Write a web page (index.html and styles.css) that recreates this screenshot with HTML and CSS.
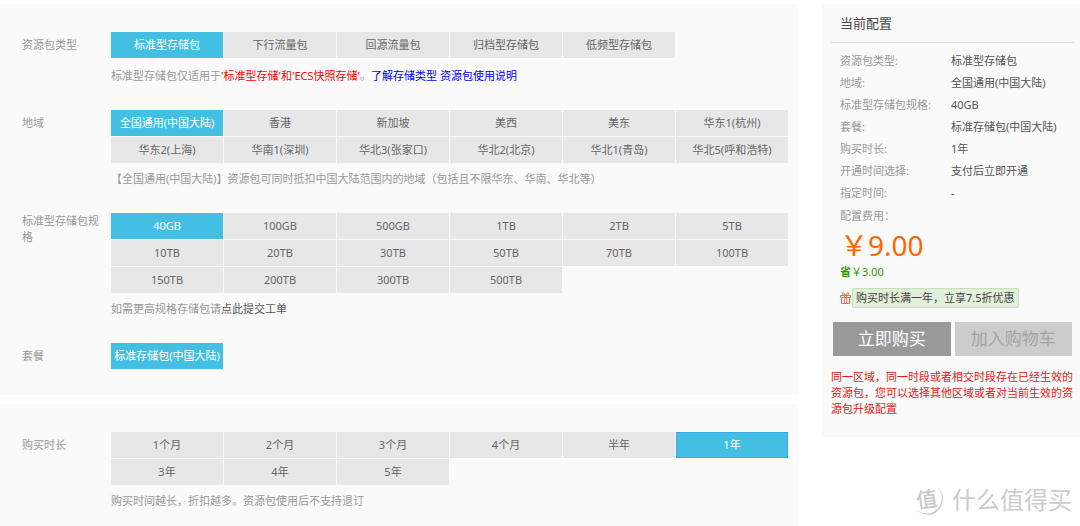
FILE: index.html
```html
<!DOCTYPE html>
<html lang="zh-CN">
<head>
<meta charset="utf-8">
<meta name="viewport" content="width=device-width, initial-scale=1">
<title>资源包购买</title>
<link rel="stylesheet" href="styles.css">
</head>
<body>
<div class="page">
  <main class="main">
    <section class="panel">
      <div class="row" role="group" aria-labelledby="l-type">
        <div class="label" id="l-type">资源包类型</div>
        <div class="field">
          <div class="options">
            <button type="button" class="option selected" aria-pressed="true">标准型存储包</button>
            <button type="button" class="option">下行流量包</button>
            <button type="button" class="option">回源流量包</button>
            <button type="button" class="option">归档型存储包</button>
            <button type="button" class="option">低频型存储包</button>
          </div>
          <p class="hint hint-spaced">标准型存储包仅适用于<span class="emphasis">'标准型存储'和'ECS快照存储'</span>。<a class="doc-link" href="#">了解存储类型</a> <a class="doc-link" href="#">资源包使用说明</a></p>
        </div>
      </div>
      <div class="row" role="group" aria-labelledby="l-region">
        <div class="label" id="l-region">地域</div>
        <div class="field">
          <div class="options">
            <button type="button" class="option selected" aria-pressed="true">全国通用(中国大陆)</button>
            <button type="button" class="option">香港</button>
            <button type="button" class="option">新加坡</button>
            <button type="button" class="option">美西</button>
            <button type="button" class="option">美东</button>
            <button type="button" class="option">华东1(杭州)</button>
            <button type="button" class="option">华东2(上海)</button>
            <button type="button" class="option">华南1(深圳)</button>
            <button type="button" class="option">华北3(张家口)</button>
            <button type="button" class="option">华北2(北京)</button>
            <button type="button" class="option">华北1(青岛)</button>
            <button type="button" class="option">华北5(呼和浩特)</button>
          </div>
          <p class="hint">【全国通用(中国大陆)】资源包可同时抵扣中国大陆范围内的地域（包括且不限华东、华南、华北等）</p>
        </div>
      </div>
      <div class="row" role="group" aria-labelledby="l-size">
        <div class="label label-wrap" id="l-size">标准型存储包规格</div>
        <div class="field">
          <div class="options">
            <button type="button" class="option selected" aria-pressed="true">40GB</button>
            <button type="button" class="option">100GB</button>
            <button type="button" class="option">500GB</button>
            <button type="button" class="option">1TB</button>
            <button type="button" class="option">2TB</button>
            <button type="button" class="option">5TB</button>
            <button type="button" class="option">10TB</button>
            <button type="button" class="option">20TB</button>
            <button type="button" class="option">30TB</button>
            <button type="button" class="option">50TB</button>
            <button type="button" class="option">70TB</button>
            <button type="button" class="option">100TB</button>
            <button type="button" class="option">150TB</button>
            <button type="button" class="option">200TB</button>
            <button type="button" class="option">300TB</button>
            <button type="button" class="option">500TB</button>
          </div>
          <p class="hint">如需更高规格存储包请<a class="ticket-link" href="#">点此提交工单</a></p>
        </div>
      </div>
      <div class="row" role="group" aria-labelledby="l-plan">
        <div class="label" id="l-plan">套餐</div>
        <div class="field">
          <div class="options">
            <button type="button" class="option selected" aria-pressed="true">标准存储包(中国大陆)</button>
          </div>
        </div>
      </div>
    </section>
    <section class="panel panel-last">
      <div class="row" role="group" aria-labelledby="l-time">
        <div class="label" id="l-time">购买时长</div>
        <div class="field">
          <div class="options">
            <button type="button" class="option">1个月</button>
            <button type="button" class="option">2个月</button>
            <button type="button" class="option">3个月</button>
            <button type="button" class="option">4个月</button>
            <button type="button" class="option">半年</button>
            <button type="button" class="option selected focused" aria-pressed="true">1年</button>
            <button type="button" class="option">3年</button>
            <button type="button" class="option">4年</button>
            <button type="button" class="option">5年</button>
          </div>
          <p class="hint">购买时间越长，折扣越多。资源包使用后不支持退订</p>
        </div>
      </div>
    </section>
  </main>
  <aside class="side">
    <section class="summary">
      <h2 class="summary-title">当前配置</h2>
      <dl class="config">
        <dt>资源包类型:</dt><dd>标准型存储包</dd>
        <dt>地域:</dt><dd>全国通用(中国大陆)</dd>
        <dt>标准型存储包规格:</dt><dd>40GB</dd>
        <dt>套餐:</dt><dd>标准存储包(中国大陆)</dd>
        <dt>购买时长:</dt><dd>1年</dd>
        <dt>开通时间选择:</dt><dd>支付后立即开通</dd>
        <dt>指定时间:</dt><dd>-</dd>
      </dl>
      <div class="cost">
        <div class="cost-label">配置费用：</div>
        <div class="price">￥9.00</div>
        <div class="saved"><b>省</b>￥3.00</div>
        <div class="promo">
          <svg class="gift" viewBox="0 0 11 12" aria-hidden="true"><path d="M.5 3.5h10v2h-10zM1.5 5.5h8v6h-8zM4.300 3.500v8M6.700 3.500v8M5.500 3.500C4.500 1 3 .200 2.300 1.200S3 3.300 5.500 3.500C8 3.300 9.400 2.200 8.700 1.200S6.500 1 5.500 3.500z"/></svg>
          <span class="promo-text">购买时长满一年，立享7.5折优惠</span>
        </div>
      </div>
      <div class="actions">
        <button type="button" class="action buy">立即购买</button>
        <button type="button" class="action cart">加入购物车</button>
      </div>
      <p class="warning">同一区域，同一时段或者相交时段存在已经生效的资源包，您可以选择其他区域或者对当前生效的资源包升级配置</p>
    </section>
    <div class="brand">
      <svg class="brand-mark" viewBox="0 0 32 32" aria-hidden="true">
        <path class="brand-ring" d="M25 3.500C30 7.500 31 14 28.500 20C25 29 14 33 4.500 26C12 33.500 25 32.500 29.500 21.500C32.500 14 30.500 7 25 3.500z"/>
        <text class="brand-char" x="15" y="23" text-anchor="middle" transform="rotate(-8 15 16)">值</text>
      </svg>
      <span class="brand-name">什么值得买</span>
    </div>
  </aside>
</div>
</body>
</html>
```

FILE: styles.css
```css
* {
  box-sizing: border-box;
}

body {
  margin: 0;
  background: #fff;
  color: #666;
  font: 11px/16px "Noto Sans", "Noto Sans CJK SC", sans-serif;
}

p, h2, dl, dd {
  margin: 0;
}

button {
  border: 0;
  padding: 0;
  font: inherit;
  cursor: pointer;
}

a {
  text-decoration: none;
}

.page {
  display: flex;
  gap: 23px;
  padding-top: 4px;
}

.main {
  flex: 1;
  min-width: 0;
  display: flex;
  flex-direction: column;
  gap: 9px;
}

.panel {
  display: flex;
  flex-direction: column;
  gap: 26px;
  padding: 28px 11px 26px 22px;
  background: #fafafa;
}

.panel-last {
  padding-bottom: 17px;
}

.row {
  display: flex;
  gap: 9px;
}

.label {
  flex: 0 0 80px;
  padding-top: 5px;
  color: #999;
}

.label-wrap {
  padding-top: 0;
}

.field {
  flex: 1;
  min-width: 0;
}

.options {
  display: grid;
  grid-template-columns: repeat(6, 1fr);
  gap: 1px;
}

.option {
  height: 26px;
  background: #e7e7e7;
  color: #666;
  white-space: nowrap;
}

.selected {
  background: #43bfe3;
  color: #fff;
}

.focused {
  border: 1px solid #41a5ee;
}

.hint {
  margin-top: 8px;
  color: #999;
}

.hint-spaced {
  margin-top: 10px;
}

.emphasis {
  color: #f00;
}

.doc-link {
  color: #00f;
}

.ticket-link {
  color: #555;
}

.side {
  flex: 0 0 258px;
  display: flex;
  flex-direction: column;
  justify-content: space-between;
}

.summary {
  padding: 0 4px 20px 9px;
  background: #fafafa;
}

.summary-title {
  margin-right: 2px;
  padding-left: 9px;
  border-bottom: 1px solid #ddd;
  color: #444;
  font-size: 13px;
  font-weight: 400;
  line-height: 38px;
}

.config {
  display: grid;
  grid-template-columns: 111px 1fr;
  margin-top: 7px;
  padding-left: 9px;
  line-height: 22px;
}

.config dt {
  color: #999;
}

.config dd {
  color: #555;
}

.cost {
  padding-left: 9px;
}

.cost-label {
  color: #999;
  line-height: 24px;
}

.price {
  color: #f60;
  font-size: 28px;
  line-height: 34px;
}

.saved {
  margin-top: 2px;
  color: #390;
}

.promo {
  display: flex;
  align-items: center;
  gap: 1px;
  margin-top: 8px;
}

.gift {
  width: 11px;
  height: 12px;
  fill: none;
  stroke: #f76b3c;
}

.promo-text {
  padding: 1px 3px;
  border: 1px solid #c5dfb8;
  border-radius: 2px;
  background: #e2efda;
  color: #444;
}

.actions {
  display: flex;
  gap: 4px;
  margin: 14px 4px 0 2px;
}

.action {
  flex: 1;
  height: 34px;
  font-size: 17px;
}

.buy {
  background: #999;
  color: #fff;
}

.cart {
  background: #ccc;
  color: #a5a5a5;
}

.warning {
  margin-top: 13px;
  color: #f01414;
}

.brand {
  display: flex;
  align-items: center;
  gap: 8px;
  padding: 0 8px 10px 90px;
  color: #ccc;
}

.brand-mark {
  width: 32px;
  height: 32px;
  overflow: visible;
}

.brand-ring {
  fill: #ccc;
}

.brand-char {
  fill: #c8c8c8;
  font-size: 21px;
  font-weight: 500;
}

.brand-name {
  font-size: 24px;
  line-height: 32px;
  white-space: nowrap;
}
```
